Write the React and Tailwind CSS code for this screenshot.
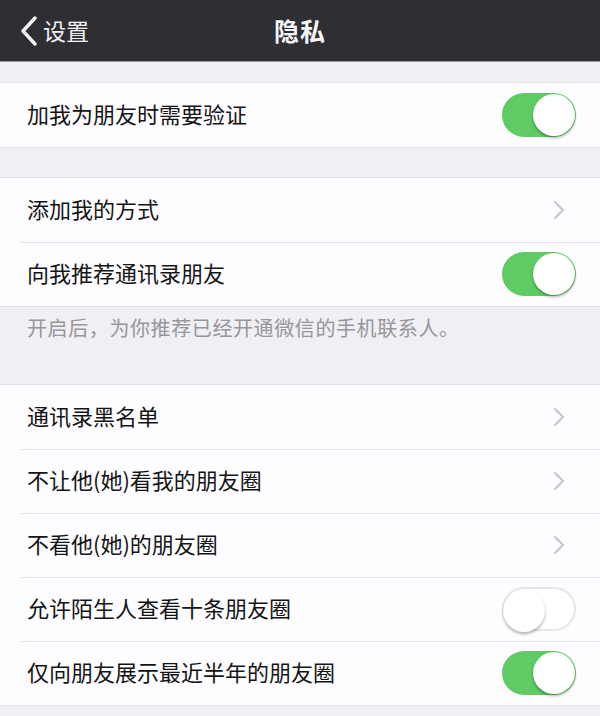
import React from 'react';

const Toggle = ({ on }) => (
    <div
        className={`relative w-[74px] h-[44px] rounded-full shrink-0 ${
            on ? 'bg-[#5fcb64]' : 'bg-white border-2 border-[#e6e6ea]'
        }`}
    >
        <div
            className={`absolute top-[1px] w-[42px] h-[42px] rounded-full bg-white shadow-[0_2px_3px_rgba(0,0,0,0.3)] ${
                on ? 'right-[1px]' : 'left-[-1px] top-[-1px]'
            }`}
        />
    </div>
);

const Chevron = () => (
    <svg width="14" height="22" viewBox="0 0 14 22" className="shrink-0 mr-[10px]">
        <path d="M3 3 L11 11 L3 19" fill="none" stroke="#c6c6cb" strokeWidth="2.2" strokeLinecap="round" strokeLinejoin="round" />
    </svg>
);

const Row = ({ label, right, first }) => (
    <div className="relative h-[64px] flex items-center justify-between pl-[27px] pr-[24px] bg-[#fdfcff]">
        {!first && <div className="absolute top-0 left-[20px] right-0 h-px bg-[#e3e3e7]" />}
        <span className="text-[22px] text-[#141414] mb-[3px]">{label}</span>
        {right === 'chevron' ? <Chevron /> : <Toggle on={right === 'on'} />}
    </div>
);

const Group = ({ children }) => (
    <div className="border-y border-[#e3e3e7]">{children}</div>
);

const App = () => {
    return (
        <div
            className="w-[600px] h-[716px] overflow-hidden bg-[#efeff4]"
            style={{ fontFamily: '"Noto Sans CJK SC", "Noto Sans", sans-serif' }}
        >
            <div className="h-[62px] bg-[#2f2e33] border-b border-[#9a9a9e] flex items-center relative">
                <div className="flex items-center pl-[20px] text-white">
                    <svg width="18" height="30" viewBox="0 0 18 30">
                        <path d="M15 2 L3 15 L15 28" fill="none" stroke="#f4f4f6" strokeWidth="3.4" strokeLinecap="round" strokeLinejoin="round" />
                    </svg>
                    <span className="ml-[5px] text-[23px] text-[#f1f1f3]">设置</span>
                </div>
                <div className="absolute inset-0 flex items-center justify-center pointer-events-none">
                    <span className="text-[25px] font-bold text-[#f6f6f8] tracking-[1px]">隐私</span>
                </div>
            </div>

            <div className="h-[20px]" />
            <Group>
                <Row first label="加我为朋友时需要验证" right="on" />
            </Group>

            <div className="h-[29px]" />
            <Group>
                <Row first label="添加我的方式" right="chevron" />
                <Row label="向我推荐通讯录朋友" right="on" />
            </Group>
            <div className="h-[77px] pl-[27px] pt-[6px]">
                <span className="text-[20px] text-[#96969b] tracking-[0.6px]">开启后，为你推荐已经开通微信的手机联系人。</span>
            </div>

            <Group>
                <Row first label="通讯录黑名单" right="chevron" />
                <Row label="不让他(她)看我的朋友圈" right="chevron" />
                <Row label="不看他(她)的朋友圈" right="chevron" />
                <Row label="允许陌生人查看十条朋友圈" right="off" />
                <Row label="仅向朋友展示最近半年的朋友圈" right="on" />
            </Group>
        </div>
    );
};

export default App;
